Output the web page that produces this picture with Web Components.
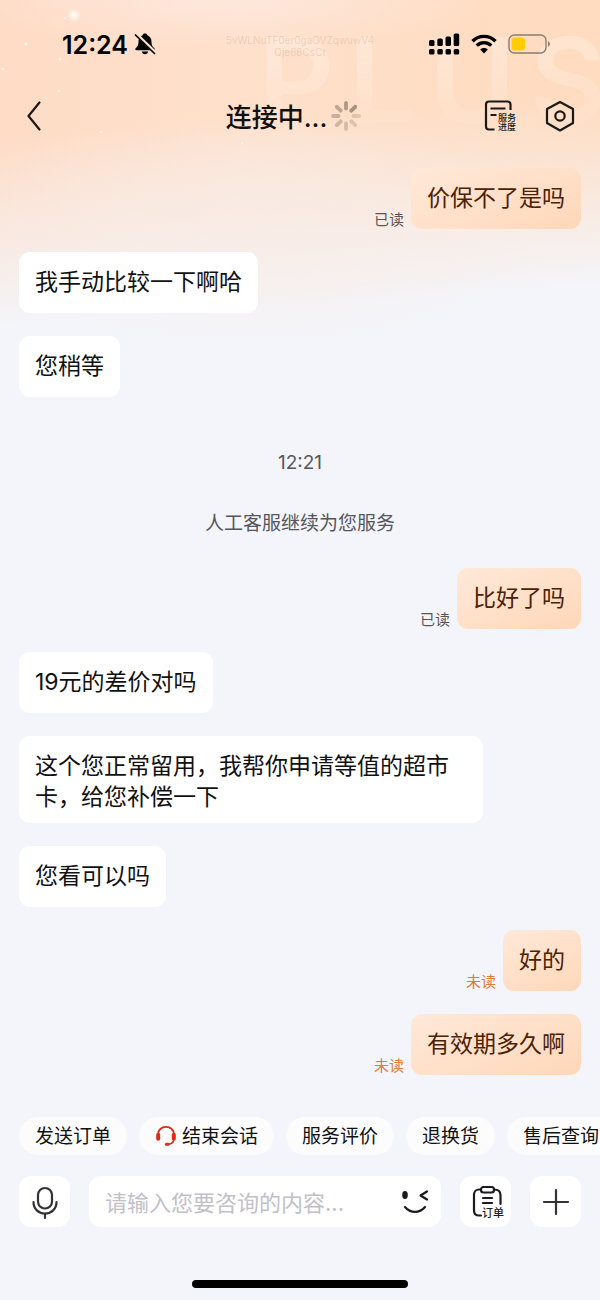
<!DOCTYPE html>
<html lang="zh-CN">
<head>
<meta charset="utf-8">
<meta name="viewport" content="width=device-width, initial-scale=1">
<title>在线客服</title>
<style>
  html, body { margin: 0; }
  body {
    background: #f4f5fa;
    font-family: Inter, "Noto Sans CJK SC", sans-serif;
    color: #111;
  }
</style>
</head>
<body>
<chat-app>
  <status-bar slot="head"></status-bar>
  <nav-bar slot="head">连接中...</nav-bar>

  <chat-message side="out" status="已读">价保不了是吗</chat-message>
  <chat-message>我手动比较一下啊哈</chat-message>
  <chat-message>您稍等</chat-message>
  <chat-notice><span>12:21</span><span>人工客服继续为您服务</span></chat-notice>
  <chat-message side="out" status="已读">比好了吗</chat-message>
  <chat-message>19元的差价对吗</chat-message>
  <chat-message>这个您正常留用，我帮你申请等值的超市卡，给您补偿一下</chat-message>
  <chat-message>您看可以吗</chat-message>
  <chat-message side="out" status="未读" unread>好的</chat-message>
  <chat-message side="out" status="未读" unread>有效期多久啊</chat-message>

  <quick-chip slot="chips">发送订单</quick-chip>
  <quick-chip slot="chips">
    <svg slot="icon" width="22" height="22" viewBox="0 0 22 22" fill="none" stroke="#dd2a1b" stroke-linecap="round" aria-hidden="true">
      <path d="M3 11.500V9.500C3 5 6.500 1.900 11 1.900S19 5 19 9.500V11.500" stroke-width="1.800"/>
      <path d="M3.200 9.800v4M18.800 9.800v4" stroke-width="4"/>
      <path d="M19 14.500c-.5 2.700-2.300 4.300-5.500 4.600" stroke-width="1.400"/>
      <path d="M11.400 19.200h1.800" stroke-width="3"/>
    </svg>结束会话</quick-chip>
  <quick-chip slot="chips">服务评价</quick-chip>
  <quick-chip slot="chips">退换货</quick-chip>
  <quick-chip slot="chips">售后查询</quick-chip>

  <message-composer slot="foot"></message-composer>
</chat-app>

<script>
  const define = (name, html) => {
    const template = document.createElement('template');
    template.innerHTML = html;
    customElements.define(name, class extends HTMLElement {
      constructor() {
        super();
        this.attachShadow({ mode: 'open' }).append(template.content.cloneNode(true));
      }
      connectedCallback() {
        const status = this.shadowRoot.querySelector('.status');
        if (status) status.textContent = this.getAttribute('status') || '';
      }
    });
  };

  define('chat-app', `
    <style>
      :host {
        display: flex; flex-direction: column; position: relative; overflow: hidden;
        min-height: 100vh; box-sizing: border-box; isolation: isolate;
      }
      .backdrop {
        position: absolute; inset: 0 0 auto 0; height: 340px; z-index: -1; overflow: hidden;
        background:
          radial-gradient(ellipse 45% 50px at 38% 0, #fee9dfcc, #fee9df00),
          radial-gradient(ellipse 50% 120px at 42% 230px, #f8ece6b0, #f8ece600),
          linear-gradient(176deg, #fddcc600 36%, #f4f5fa 86%),
          linear-gradient(90deg, #fedcc6, #fee0cb 40%, #ffdbbf);
      }
      .sparkles { position: absolute; top: 0; left: 0; }
      .plus {
        position: absolute; top: 20px; left: 43%;
        display: flex; gap: 14px;
        font-size: 118px; line-height: 120px; font-weight: 600; color: #fff3e9;
        opacity: .38;
        -webkit-mask-image: linear-gradient(#000 30%, #0003 90%);
        mask-image: linear-gradient(#000 30%, #0003 90%);
      }
      .trace {
        position: absolute; top: 34px; left: 0; right: 0;
        text-align: center; font-size: 10px; line-height: 12px; color: #b4907440;
      }
      main { flex: 1; display: flex; flex-direction: column; gap: 23px; padding: 24px 19px 42px; }
      .chips { display: flex; gap: 12px; padding: 0 19px; overflow: hidden; }
      .home { width: 36%; height: 8px; border-radius: 4px; background: #000; margin: 53px auto 12px; }
    </style>
    <div class="backdrop" aria-hidden="true">
      <div class="plus"><span>P</span><span>L</span><span>U</span><span>S</span></div>
      <svg class="sparkles" width="260" height="150">
        <defs><radialGradient id="g"><stop offset=".2" stop-color="#fffaf0"/><stop offset="1" stop-color="#fff5e8" stop-opacity="0"/></radialGradient></defs>
        <circle cx="74" cy="15" r="7" fill="url(#g)"/>
        <g fill="#fff6ea"><circle cx="26" cy="44" r="1.500"/><circle cx="60" cy="59" r="1.500"/><circle cx="3" cy="69" r="1.500"/><circle cx="59" cy="91" r="1"/><circle cx="101" cy="132" r="1.500"/><circle cx="65" cy="18" r="1"/><circle cx="242" cy="143" r="1"/></g>
      </svg>
      <div class="trace">5vWLNuTF0er0gaOVZqwuwV4<br>Qje86CsCt</div>
    </div>
    <slot name="head"></slot>
    <main><slot></slot></main>
    <div class="chips"><slot name="chips"></slot></div>
    <slot name="foot"></slot>
    <div class="home"></div>
  `);

  define('status-bar', `
    <style>
      :host { display: flex; align-items: center; justify-content: space-between; height: 88px; padding: 0 49px 0 62px; color: #000; }
      .left { display: flex; align-items: center; gap: 6px; }
      .right { display: flex; align-items: center; gap: 11px; }
      time { font-size: 25px; line-height: 30px; font-weight: 600; padding-top: 2px; }
      svg { display: block; }
    </style>
    <div class="left">
      <time>12:24</time>
      <svg width="22" height="22" viewBox="0 0 22 22" aria-label="静音">
        <path d="M11 .5c-1.400 0-2.100.7-2.300 1.700C6 3.200 4.500 5.500 4.500 8.500c0 4-1 5-2.700 6.600-.9.900-.6 2.100.7 2.100h17c1.300 0 1.600-1.200.7-2.100-1.700-1.600-2.700-2.600-2.700-6.600 0-3-1.500-5.300-4.200-6.300C13.100 1.200 12.400.5 11 .5zM7.800 18.500h6.400c-.4 1.700-1.600 2.700-3.200 2.700s-2.800-1-3.200-2.700z"/>
        <path d="M2.300 1l19 18.500" stroke="#fee1cf" stroke-width="3.200"/>
        <path d="M1.500 2l19 18.500" stroke="#000" stroke-width="1.700" stroke-linecap="round"/>
      </svg>
    </div>
    <div class="right">
      <svg width="31" height="22" viewBox="0 0 31 22" aria-label="信号">
        <rect x="0" y="7" width="5.500" height="6" rx="1.500"/><rect x="8.300" y="5.500" width="5.500" height="7.500" rx="1.500"/><rect x="16.500" y="3.500" width="5.500" height="9.500" rx="1.500"/><rect x="24.700" y="0.500" width="5.500" height="12.500" rx="1.500"/>
        <rect x="0" y="16" width="5.500" height="5.500" rx="1.500"/><rect x="8.300" y="16" width="5.500" height="5.500" rx="1.500"/><rect x="16.500" y="16" width="5.500" height="5.500" rx="1.500"/><rect x="24.700" y="16" width="5.500" height="5.500" rx="1.500"/>
      </svg>
      <svg width="26" height="20" viewBox="0 0 26 20" fill="none" stroke="#000" stroke-width="3.400" aria-label="无线网络">
        <path d="M1.500 7.200C8 .8 18 .8 24.500 7.200M5.700 11.600c4.100-4 10.500-4 14.600 0"/>
        <path d="M13 19.500l-3.800-4c2-2 5.600-2 7.600 0z" fill="#000" stroke="none"/>
      </svg>
      <svg width="43" height="20" viewBox="0 0 43 20" aria-label="电量">
        <rect x="1" y="1" width="37" height="18" rx="5.500" fill="none" stroke="#8c7c70" stroke-width="1.400"/>
        <rect x="3.500" y="3.500" width="13.500" height="13" rx="3.500" fill="#ffcc00"/>
        <path d="M40 7.300c2.600 1 2.600 4.400 0 5.400z" fill="#8c7c70"/>
      </svg>
    </div>
  `);

  define('nav-bar', `
    <style>
      :host { display: grid; grid-template-columns: 1fr auto 1fr; align-items: center; height: 56px; padding: 0 24px 0 12px; }
      button { border: 0; padding: 0; background: none; font: inherit; color: #1a1a1a; display: block; }
      svg { display: block; }
      h1 { margin: 0; font-size: 26px; line-height: 36px; font-weight: 500; display: flex; align-items: center; gap: 3px; }
      h1 span { padding-top: 4px; }
      .actions { display: flex; justify-content: flex-end; align-items: center; gap: 27px; }
    </style>
    <button aria-label="返回">
      <svg width="40" height="40" viewBox="0 0 40 40" fill="none" stroke="currentColor" stroke-width="2.200" stroke-linecap="round" stroke-linejoin="round"><path d="M27.500 6.500L16.500 20l11 13.500"/></svg>
    </button>
    <h1><span><slot></slot></span>
      <svg width="32" height="32" viewBox="-16 -16 32 32" stroke="#4a3a30" stroke-width="3.800" stroke-linecap="round" aria-hidden="true">
        <path d="M0-7.500V-13" opacity=".42"/><path d="M0-7.500V-13" transform="rotate(45)" opacity=".48"/>
        <path d="M0-7.500V-13" transform="rotate(90)" opacity=".16"/><path d="M0-7.500V-13" transform="rotate(135)" opacity=".18"/>
        <path d="M0-7.500V-13" transform="rotate(180)" opacity=".21"/><path d="M0-7.500V-13" transform="rotate(225)" opacity=".25"/>
        <path d="M0-7.500V-13" transform="rotate(270)" opacity=".29"/><path d="M0-7.500V-13" transform="rotate(315)" opacity=".34"/>
      </svg>
    </h1>
    <div class="actions">
      <button>
        <svg width="34" height="36" viewBox="0 0 34 36" fill="none" stroke="currentColor" stroke-width="2.200">
          <path d="M27.500 12V6.500a3 3 0 0 0-3-3H6a3 3 0 0 0-3 3v22a3 3 0 0 0 3 3h5.500M7.500 10.500h15M7.500 17h6"/>
          <text x="15" y="23" font-size="9" font-weight="500" fill="currentColor" stroke="none">服务</text>
          <text x="15" y="32" font-size="9" font-weight="500" fill="currentColor" stroke="none">进度</text>
        </svg>
      </button>
      <button aria-label="设置">
        <svg width="32" height="32" viewBox="0 0 32 32" fill="none" stroke="currentColor" stroke-width="2.200" stroke-linejoin="round"><path d="M16 2L29 9v14L16 30.500 3 23V9z"/><circle cx="16" cy="16" r="4.700"/></svg>
      </button>
    </div>
  `);

  define('chat-message', `
    <style>
      :host { display: flex; align-items: flex-end; gap: 7px; }
      :host([side="out"]) { justify-content: flex-end; }
      .status { font-size: 15px; line-height: 18px; color: #5a5654; }
      :host(:not([status])) .status { display: none; }
      :host([unread]) .status { color: #e07a35; }
      .bubble {
        box-sizing: border-box; min-height: 61px; max-width: 82.5%;
        padding: 15px 16px 10px; border-radius: 11px; background: #fff;
        font-size: 23px; line-height: 31px; color: #111;
      }
      :host([side="out"]) .bubble { background: linear-gradient(155deg, #ffe9d9, #ffd7b9); color: #4a2208; }
    </style>
    <span class="status"></span>
    <div class="bubble"><slot></slot></div>
  `);

  define('chat-notice', `
    <style>
      :host { display: flex; flex-direction: column; align-items: center; gap: 37px; padding: 31px 0 9px; }
      ::slotted(span) { font-size: 19px; line-height: 24px; color: #55565c; }
    </style>
    <slot></slot>
  `);

  define('quick-chip', `
    <style>
      :host { display: block; flex: none; }
      button {
        display: flex; align-items: center; gap: 5px; height: 38px; padding: 0 16px;
        border: 0; border-radius: 19px; background: #fcfcfd; color: #111;
        font: inherit; font-size: 19px; line-height: 26px; white-space: nowrap;
      }
      span { padding-top: 2px; }
      ::slotted(svg) { display: block; }
    </style>
    <button><slot name="icon"></slot><span><slot></slot></span></button>
  `);

  define('message-composer', `
    <style>
      :host { display: flex; gap: 19px; padding: 21px 19px 0; }
      button { border: 0; padding: 0; background: none; font: inherit; color: #1c1c1e; display: grid; place-items: center; flex: none; }
      .tile { width: 51px; height: 51px; border-radius: 12px; background: #fff; }
      .field { flex: 1; min-width: 0; display: flex; align-items: center; height: 51px; box-sizing: border-box; padding: 0 10px 0 16px; border-radius: 12px; background: #fff; }
      input { flex: 1; min-width: 0; border: 0; padding: 2px 0 0; outline: 0; background: none; font: inherit; font-size: 22px; line-height: 30px; color: #111; }
      input::placeholder { color: #bfc0c8; opacity: 1; }
      svg { display: block; }
    </style>
    <button class="tile" aria-label="语音">
      <svg width="32" height="36" viewBox="0 0 32 36" fill="none" stroke="#333" stroke-width="2.200" stroke-linecap="round"><rect x="9" y="4" width="14" height="20.500" rx="7"/><path d="M4.500 18c0 7 5 11.500 11.500 11.500S27.500 25 27.500 18M16 29.500V34"/></svg>
    </button>
    <div class="field">
      <input type="text" aria-label="咨询内容" placeholder="请输入您要咨询的内容...">
      <button aria-label="表情">
        <svg width="32" height="32" viewBox="0 0 32 32" fill="none" stroke="currentColor" stroke-width="2.200" stroke-linecap="round" stroke-linejoin="round"><ellipse cx="6" cy="9" rx="2.800" ry="4" fill="currentColor" stroke="none"/><path d="M28 5.500L21.500 9.500l6.500 4M6 21c5.500 6.500 14.500 6.500 20 0"/></svg>
      </button>
    </div>
    <button class="tile">
      <svg width="36" height="36" viewBox="0 0 36 36" fill="none" stroke="currentColor" stroke-width="2.200" stroke-linecap="round">
        <path d="M12 5.500h-1a5 5 0 0 0-5 5v16c0 3 2 5 5 5h2M26 5.500c4 0 6.500 2 6.500 5.500v9"/>
        <rect x="13" y="3" width="13" height="5.500" rx="2.500"/>
        <path d="M15 14h9M15 19h9"/>
        <text x="14" y="33" font-size="11" font-weight="500" fill="currentColor" stroke="none">订单</text>
      </svg>
    </button>
    <button class="tile" aria-label="更多">
      <svg width="30" height="30" viewBox="0 0 30 30" fill="none" stroke="#333" stroke-width="2.200" stroke-linecap="round"><path d="M15 3v24M3 15h24"/></svg>
    </button>
  `);
</script>
</body>
</html>
